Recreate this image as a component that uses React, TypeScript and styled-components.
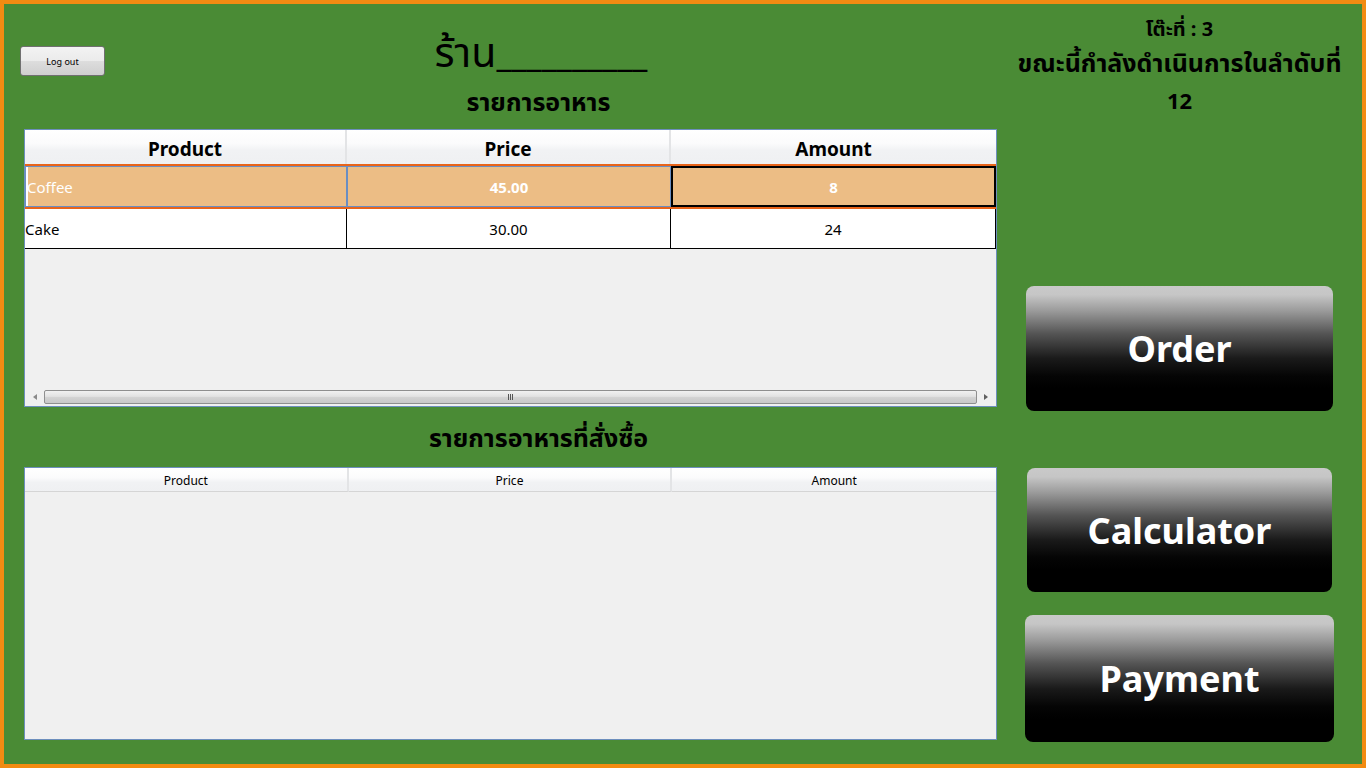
import React from 'react';
import styled, { createGlobalStyle } from 'styled-components';

const GlobalStyle = createGlobalStyle`
  html, body {
    margin: 0;
    padding: 0;
  }
  body {
    font-family: "Noto Sans", "Open Sans", sans-serif;
  }
`;

const thai = `"Tahoma", "Noto Sans Thai", "Loma", "Garuda", "Noto Sans", sans-serif`;

const Frame = styled.div`
  width: 1366px;
  height: 768px;
  box-sizing: border-box;
  border: 4px solid #f28b12;
  background: #4a8b35;
  display: flex;
`;

const LeftColumn = styled.div`
  width: 977px;
  padding-left: 16px;
  display: flex;
  flex-direction: column;
`;

const Header = styled.div`
  height: 76px;
  display: grid;
  grid-template-columns: 85px 1fr;
`;

const LogOutButton = styled.button`
  margin-top: 42px;
  width: 85px;
  height: 30px;
  box-sizing: border-box;
  border: 1px solid #707070;
  border-radius: 3px;
  background: linear-gradient(to bottom, #f3f3f3 0%, #ebebeb 50%, #dddddd 51%, #cfcfcf 100%);
  font-family: "Noto Sans", sans-serif;
  font-size: 9px;
  color: #000;
  padding: 0;
`;

const ShopTitle = styled.div`
  padding-right: 20px;
  padding-top: 25px;
  text-align: center;
  font-family: ${thai};
  font-size: 41px;
  line-height: 50px;
  color: #000;
  white-space: nowrap;
`;

const Blank = styled.span`
  font-family: "Noto Sans", sans-serif;
  font-size: 34px;
`;

const SectionLabel = styled.div<{ $height: number; $pad?: number; $bottom?: number }>`
  height: ${p => p.$height}px;
  padding-left: 60px;
  padding-top: ${p => p.$pad ?? 0}px;
  padding-bottom: ${p => p.$bottom ?? 0}px;
  box-sizing: border-box;
  display: flex;
  align-items: center;
  justify-content: center;
  font-family: ${thai};
  font-weight: bold;
  font-size: 25px;
  color: #000;
  white-space: nowrap;
`;

const TableBox = styled.div<{ $height: number }>`
  margin-left: 4px;
  width: 973px;
  height: ${p => p.$height}px;
  box-sizing: border-box;
  border: 1px solid #6d8fbd;
  background: #f0f0f0;
  display: flex;
  flex-direction: column;
`;

const HeaderRow = styled.div<{ $cols: string; $height: number }>`
  display: grid;
  grid-template-columns: ${p => p.$cols};
  height: ${p => p.$height}px;
  background: linear-gradient(to bottom, #ffffff 0%, #fbfbfc 40%, #f1f2f4 60%, #eff0f2 100%);
`;

const HeaderCell = styled.div<{ $big?: boolean }>`
  display: flex;
  align-items: center;
  justify-content: center;
  box-sizing: border-box;
  padding-top: ${p => (p.$big ? '4px' : '2px')};
  border-right: 2px solid #e3e4e6;
  border-bottom: ${p => (p.$big ? 'none' : '1px solid #d5d5d5')};
  font-size: ${p => (p.$big ? '19px' : '12px')};
  font-weight: ${p => (p.$big ? 'bold' : 'normal')};
  color: #000;
  &:last-child {
    border-right: none;
  }
`;

const OrangeLine = styled.div`
  height: 2px;
  background: #e8641a;
`;

const DataRow = styled.div<{ $selected?: boolean }>`
  display: grid;
  grid-template-columns: 322px 324px 325px;
  height: ${p => (p.$selected ? 41 : 39)}px;
  background: ${p => (p.$selected ? '#ecbd85' : '#ffffff')};
  border-bottom: ${p => (p.$selected ? 'none' : '1px solid #000')};
  color: ${p => (p.$selected ? '#ffffff' : '#000000')};
  font-size: 15px;
`;

const Cell = styled.div<{ $align?: 'left' | 'center'; $state?: 'plain' | 'blue' | 'focus' }>`
  display: flex;
  align-items: center;
  justify-content: ${p => (p.$align === 'left' ? 'flex-start' : 'center')};
  box-sizing: border-box;
  border: ${p =>
    p.$state === 'focus' ? '2px solid #000' : p.$state === 'blue' ? '1px solid #6a8ec2' : 'none'};
  border-right: ${p =>
    p.$state === 'focus' ? '2px solid #000' : p.$state === 'blue' ? '1px solid #6a8ec2' : '1px solid #000'};
  padding-left: ${p => (p.$align === 'left' ? (p.$state === 'blue' ? '1px' : '0') : '0')};
  font-weight: ${p => (p.$state ? 'bold' : 'normal')};
  &.first-selected {
    box-shadow: inset 2px 0 0 #ffffff;
    font-weight: normal;
  }
`;

const Filler = styled.div`
  flex: 1;
`;

const ScrollBar = styled.div`
  height: 16px;
  display: flex;
  align-items: center;
  padding: 0 2px 1px 2px;
`;

const Arrow = styled.div<{ $dir: 'left' | 'right' }>`
  width: 16px;
  display: flex;
  justify-content: center;
  &::before {
    content: '';
    width: 0;
    height: 0;
    border-top: 3px solid transparent;
    border-bottom: 3px solid transparent;
    ${p => (p.$dir === 'left' ? 'border-right: 4px solid #8a8a8a;' : 'border-left: 4px solid #606060;')}
  }
`;

const Thumb = styled.div`
  flex: 1;
  margin: 0 1px;
  height: 14px;
  box-sizing: border-box;
  border: 1px solid #8f8f8f;
  border-radius: 2px;
  background: linear-gradient(to bottom, #f1f1f1 0%, #e2e2e2 45%, #d2d2d2 55%, #c8c8c8 100%);
  display: flex;
  align-items: center;
  justify-content: center;
`;

const Grip = styled.div`
  display: flex;
  gap: 1px;
  span {
    width: 1px;
    height: 6px;
    background: #555;
  }
`;

const RightColumn = styled.div`
  flex: 1;
  display: flex;
  flex-direction: column;
  align-items: center;
  font-family: ${thai};
  font-weight: bold;
  color: #000;
`;

const InfoLine = styled.div<{ $size: number; $height: number }>`
  height: ${p => p.$height}px;
  display: flex;
  align-items: center;
  font-size: ${p => p.$size}px;
  white-space: nowrap;
`;

const BigButton = styled.button<{ $width: number; $height: number; $top: number }>`
  width: ${p => p.$width}px;
  height: ${p => p.$height}px;
  margin-top: ${p => p.$top}px;
  border: none;
  border-radius: 8px;
  background: linear-gradient(
    to bottom,
    #c9c9c9 0%,
    #c6c6c6 7%,
    #9a9a9a 20%,
    #555555 38%,
    #1a1a1a 58%,
    #050505 72%,
    #000000 82%,
    #000000 100%
  );
  color: #ffffff;
  font-family: "Noto Sans", "Open Sans", sans-serif;
  font-weight: bold;
  font-size: 36px;
  padding: 0;
`;

const App = () => {
  return (
    <Frame>
      <GlobalStyle />
      <LeftColumn>
        <Header>
          <LogOutButton>Log out</LogOutButton>
          <ShopTitle>
            ร้าน<Blank>__________</Blank>
          </ShopTitle>
        </Header>
        <SectionLabel $height={49} $bottom={4}>รายการอาหาร</SectionLabel>
        <TableBox $height={278}>
          <HeaderRow $cols="322px 324px 1fr" $height={34}>
            <HeaderCell $big>Product</HeaderCell>
            <HeaderCell $big>Price</HeaderCell>
            <HeaderCell $big>Amount</HeaderCell>
          </HeaderRow>
          <OrangeLine />
          <DataRow $selected>
            <Cell $align="left" $state="blue" className="first-selected">Coffee</Cell>
            <Cell $state="blue">45.00</Cell>
            <Cell $state="focus">8</Cell>
          </DataRow>
          <OrangeLine />
          <DataRow>
            <Cell $align="left">Cake</Cell>
            <Cell>30.00</Cell>
            <Cell>24</Cell>
          </DataRow>
          <Filler />
          <ScrollBar>
            <Arrow $dir="left" />
            <Thumb>
              <Grip>
                <span />
                <span />
                <span />
              </Grip>
            </Thumb>
            <Arrow $dir="right" />
          </ScrollBar>
        </TableBox>
        <SectionLabel $height={60} $pad={3}>รายการอาหารที่สั่งซื้อ</SectionLabel>
        <TableBox $height={273}>
          <HeaderRow $cols="repeat(3, 1fr)" $height={24}>
            <HeaderCell>Product</HeaderCell>
            <HeaderCell>Price</HeaderCell>
            <HeaderCell>Amount</HeaderCell>
          </HeaderRow>
        </TableBox>
      </LeftColumn>
      <RightColumn>
        <InfoLine $size={20} $height={52}>โต๊ะที่ : 3</InfoLine>
        <InfoLine $size={25} $height={16}>ขณะนี้กำลังดำเนินการในลำดับที่</InfoLine>
        <InfoLine $size={22} $height={60}>12</InfoLine>
        <BigButton $width={307} $height={125} $top={154}>Order</BigButton>
        <BigButton $width={305} $height={124} $top={57}>Calculator</BigButton>
        <BigButton $width={309} $height={127} $top={23}>Payment</BigButton>
      </RightColumn>
    </Frame>
  );
};

export default App;
